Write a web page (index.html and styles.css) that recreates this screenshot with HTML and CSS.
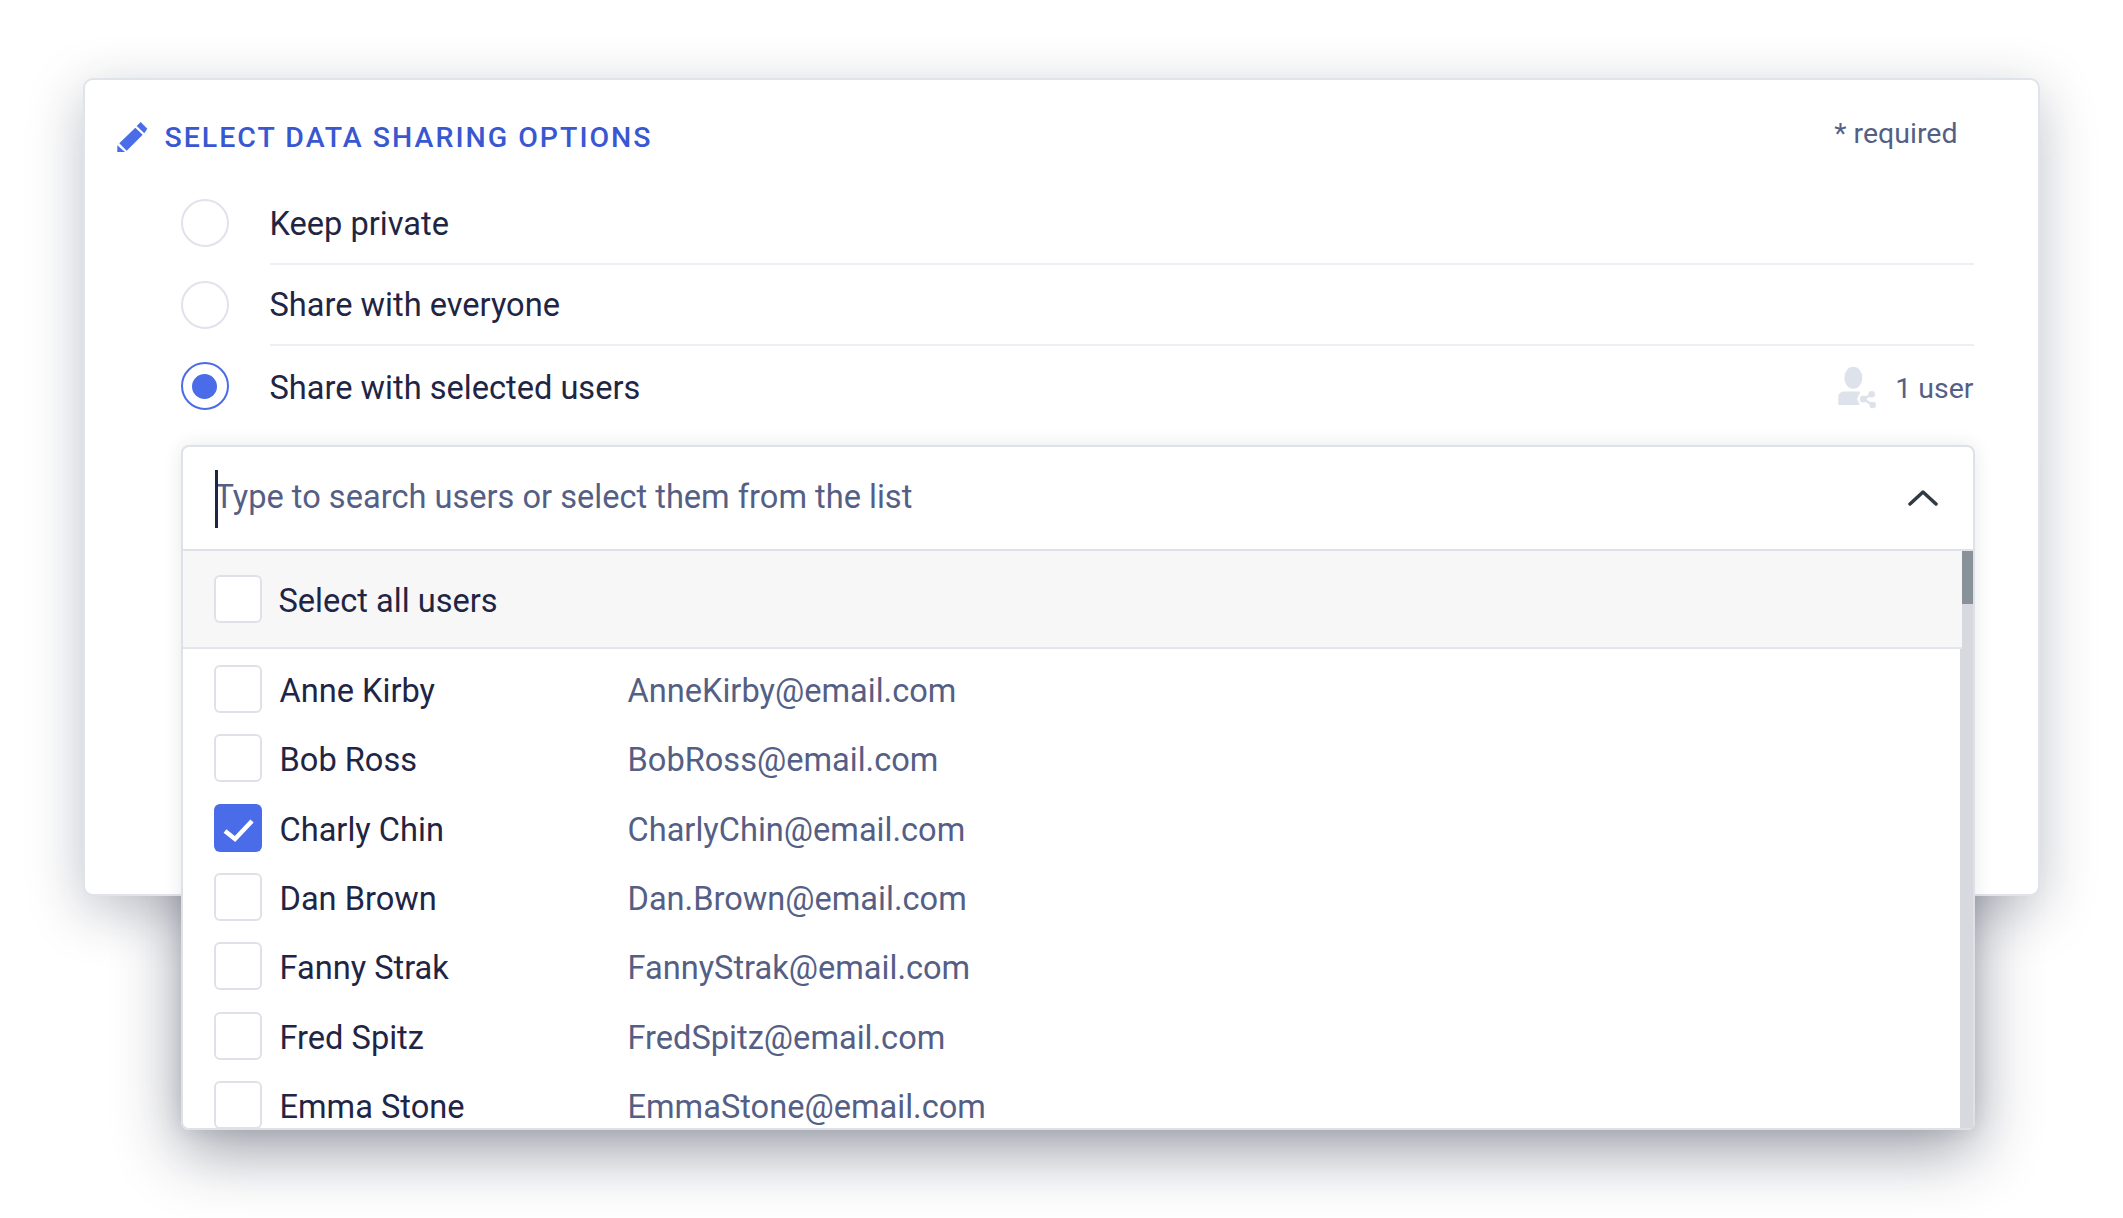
FILE: index.html
```html
<!DOCTYPE html>
<html lang="en">
<head>
<meta charset="utf-8">
<title>Select data sharing options</title>
<link rel="stylesheet" href="styles.css">
</head>
<body>
<main class="card">
  <header class="card-head">
    <h1 class="title">
      <svg class="pencil" viewBox="0 0 32 32" width="32" height="32" aria-hidden="true">
        <path d="M24.7 1 31.3 7.7 28.3 12.3 20.7 5Z"/>
        <path d="M19.3 6.7 26.7 13.7 10.7 29.7 3.3 22.3Z"/>
        <path d="M1.3 24.3 9 31H1.3Z"/>
      </svg>
      SELECT DATA SHARING OPTIONS
    </h1>
    <span class="required">* required</span>
  </header>

  <div class="option">
    <span class="radio"></span>
    <div class="option-body"><span class="label">Keep private</span></div>
  </div>
  <div class="option">
    <span class="radio"></span>
    <div class="option-body"><span class="label">Share with everyone</span></div>
  </div>
  <div class="option">
    <span class="radio radio-on"></span>
    <div class="option-body option-last">
      <span class="label">Share with selected users</span>
      <span class="count">
        <svg class="share-user" viewBox="0 0 40 44" width="40" height="44" aria-hidden="true">
          <ellipse cx="17.300" cy="12.700" rx="9" ry="11"/>
          <path d="M2.300 40V32Q2.300 26.500 9 26.500H24.500L21 34 24 40Z"/>
          <circle cx="27.300" cy="34" r="3.500"/>
          <circle cx="35.700" cy="29.300" r="3.300"/>
          <circle cx="36.700" cy="40" r="3.300"/>
          <path class="share-link" d="M35.700 29.300 27.300 34 36.700 40"/>
        </svg>
        <span class="count-text">1 user</span>
      </span>
    </div>
  </div>

  <section class="dropdown">
    <div class="search">
      <span class="search-text"><i class="caret"></i>Type to search users or select them from the list</span>
      <svg class="chevron" viewBox="0 0 30 16" width="30" height="16" aria-hidden="true">
        <path d="M2 14 15 2 28 14"/>
      </svg>
    </div>
    <div class="panel">
      <div class="panel-main">
        <div class="select-all">
          <span class="check"></span>
          <span class="name">Select all users</span>
        </div>
        <ul class="users">
          <li class="user"><span class="check"></span><span class="name">Anne Kirby</span><span class="email">AnneKirby@email.com</span></li>
          <li class="user"><span class="check"></span><span class="name">Bob Ross</span><span class="email">BobRoss@email.com</span></li>
          <li class="user"><span class="check check-on"><svg viewBox="0 0 48 48" width="48" height="48" aria-hidden="true"><path d="M11 27 21 35 38 17"/></svg></span><span class="name">Charly Chin</span><span class="email">CharlyChin@email.com</span></li>
          <li class="user"><span class="check"></span><span class="name">Dan Brown</span><span class="email">Dan.Brown@email.com</span></li>
          <li class="user"><span class="check"></span><span class="name">Fanny Strak</span><span class="email">FannyStrak@email.com</span></li>
          <li class="user"><span class="check"></span><span class="name">Fred Spitz</span><span class="email">FredSpitz@email.com</span></li>
          <li class="user"><span class="check"></span><span class="name">Emma Stone</span><span class="email">EmmaStone@email.com</span></li>
        </ul>
      </div>
      <div class="scrollbar"><div class="thumb"></div></div>
    </div>
  </section>
</main>
</body>
</html>
```
FILE: styles.css
```css
* { box-sizing: border-box; }
html { background: #fff; }
body {
  margin: 0;
  padding: 78px 0 0 82.500px;
  height: 1218px;
  overflow: hidden;
  font-family: Roboto, "Liberation Sans", sans-serif;
  color: #1f2544;
}
.card {
  width: 1957px;
  height: 818px;
  background: #fff;
  border: 2px solid #e0e3eb;
  border-radius: 10px;
  box-shadow: 0 15px 55px rgba(30, 35, 60, .28);
  padding: 0 0 0 96px;
}
.card-head {
  height: 103px;
  margin-left: -96px;
  padding: 38px 80px 0 31px;
  display: flex;
  justify-content: space-between;
  align-items: flex-start;
}
.title {
  margin: 0;
  display: flex;
  align-items: center;
  gap: 17px;
  font-size: 28.500px;
  font-weight: 500;
  letter-spacing: 2px;
  line-height: 40px;
  color: #3a57d2;
}
.pencil { fill: #4a6ce8; margin-top: -2px; }
.required {
  font-size: 28.500px;
  line-height: 40px;
  margin-top: -4px;
  color: #555f85;
}
.option {
  display: flex;
  align-items: center;
  gap: 41px;
  height: 81.500px;
  margin-right: 64px;
}
.radio {
  flex: none;
  width: 48px;
  height: 48px;
  margin-top: -1px;
  border: 2px solid #e0e3eb;
  border-radius: 50%;
  display: flex;
  align-items: center;
  justify-content: center;
}
.radio-on { border-color: #4a6ce8; }
.radio-on::after {
  content: "";
  width: 25px;
  height: 25px;
  border-radius: 50%;
  background: #4a6ce8;
}
.option-body {
  flex: 1;
  height: 100%;
  display: flex;
  align-items: center;
  justify-content: space-between;
  border-bottom: 2px solid #eeeff5;
  font-size: 32.600px;
}
.option-last { border-bottom: 0; }
.label { padding-top: 2px; }
.count {
  display: flex;
  align-items: center;
  gap: 19px;
  font-size: 28.500px;
  color: #555f85;
}
.count-text { padding-top: 3px; }
.share-user { fill: #dde2eb; }
.share-link { fill: none; stroke: #dde2eb; stroke-width: 2.500; }
.dropdown {
  position: relative;
  width: 1794px;
  height: 684.500px;
  margin-top: 17.500px;
  background: #fff;
  border: 2px solid #dfe1e9;
  border-radius: 8px;
  box-shadow: 0 0 18px rgba(30, 35, 60, .1);
  display: flex;
  flex-direction: column;
}
.dropdown::before {
  content: "";
  position: absolute;
  inset: -2px;
  z-index: -1;
  border-radius: 8px;
  box-shadow: 0 20px 65px rgba(30, 35, 60, .45);
}
.search {
  flex: none;
  height: 104px;
  padding: 0 35px 0 32px;
  display: flex;
  align-items: center;
  justify-content: space-between;
  border-bottom: 2px solid #dfe1e9;
}
.search-text {
  position: relative;
  margin-top: -3px;
  font-size: 32.600px;
  color: #555f85;
}
.caret {
  position: absolute;
  left: 0;
  top: -8px;
  width: 3px;
  height: 58px;
  background: #1f2544;
}
.chevron { fill: none; stroke: #2f3a45; stroke-width: 3.500; stroke-linecap: round; stroke-linejoin: round; }
.panel {
  flex: 1;
  min-height: 0;
  display: flex;
}
.panel-main {
  flex: 1;
  min-width: 0;
  display: flex;
  flex-direction: column;
}
.select-all {
  position: relative;
  flex: none;
  height: 97.500px;
  margin-right: -2px;
  padding-left: 31px;
  display: flex;
  align-items: center;
  gap: 17px;
  background: #f7f7f7;
  border-bottom: 2px solid #e4e6ee;
  font-size: 32.600px;
}
.users {
  flex: 1;
  min-height: 0;
  margin: 0;
  padding: 6px 0 0 31px;
  list-style: none;
  overflow: hidden;
}
.user {
  height: 69.330px;
  display: flex;
  align-items: center;
  font-size: 32.600px;
}
.name, .email { padding-top: 4px; }
.check {
  flex: none;
  width: 48px;
  height: 48px;
  background: #fff;
  border: 2px solid #e0e1e8;
  border-radius: 6px;
}
.check-on { background: #4a6ce8; border: 0; }
.check-on svg { display: block; fill: none; stroke: #fff; stroke-width: 4.500; }
.user .name {
  width: 366px;
  padding-left: 18px;
  flex: none;
}
.email { color: #555f85; }
.scrollbar {
  flex: none;
  width: 13px;
  background: #d8d9df;
  padding-left: 2px;
}
.thumb {
  height: 53px;
  background: #8a9299;
}
```
